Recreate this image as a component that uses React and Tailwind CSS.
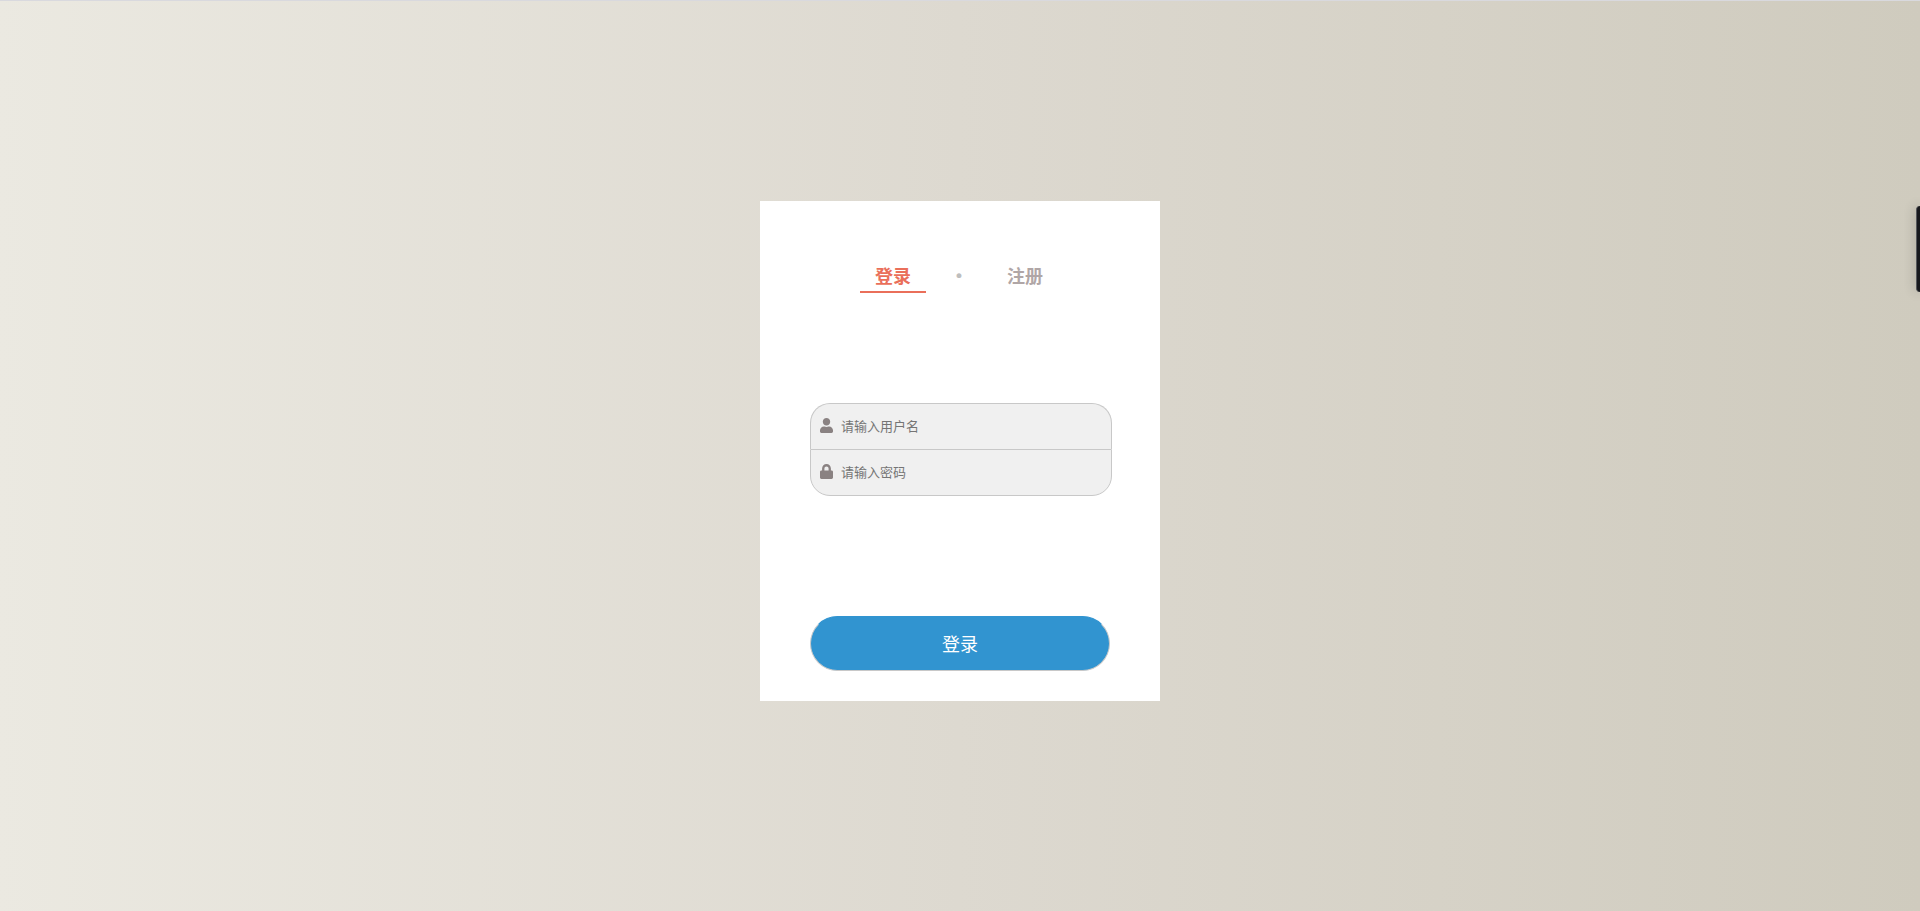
import { useState } from 'react'
import { FaUser, FaLock } from 'react-icons/fa'

const tabs = [
  { id: 'login', label: '登录' },
  { id: 'register', label: '注册' },
]

function Tab({ tab, active, onSelect }) {
  return (
    <a
      href={`#${tab.id}`}
      onClick={() => onSelect(tab.id)}
      className={`border-b-2 px-[15px] leading-[30px] ${active ? 'border-[#ea6f5a] text-[#ea6f5a]' : 'border-transparent text-[#b0a6a6]'}`}
    >
      {tab.label}
    </a>
  )
}

function Field({ id, type, icon: Icon, placeholder, className }) {
  return (
    <div className={`flex items-center border border-[#c8c8c8] bg-[#f0f0f0] pl-[9px] ${className}`}>
      <label htmlFor={id} aria-label={placeholder} className="pb-0.5 text-[#8a8282]">
        <Icon className="h-[15px] w-[13px]" aria-hidden="true" />
      </label>
      <input
        id={id}
        type={type}
        placeholder={placeholder}
        className="h-[45px] min-w-0 flex-1 bg-transparent pb-0.5 pl-2 text-[13px] outline-none placeholder:text-[#757575]"
      />
    </div>
  )
}

export default function App() {
  const [active, setActive] = useState('login')
  const current = tabs.find((tab) => tab.id === active)

  return (
    <div className="relative min-h-screen overflow-hidden border-t border-[#d9d9de] bg-linear-to-r from-[#ebe9e1] via-[#ddd9d0] to-[#cfcbbe] font-['Noto_Sans','Noto_Sans_CJK_SC',sans-serif]">
      <main className="mx-auto mt-[200px] flex h-[500px] w-full max-w-[400px] flex-col bg-white px-[50px]">
        <nav className="mt-[60px] mr-0.5 flex items-center justify-center text-lg font-bold">
          <Tab tab={tabs[0]} active={active === 'login'} onSelect={setActive} />
          <b className="w-[66px] pb-1 text-center text-2xl leading-7 text-[#bebebe]">·</b>
          <Tab tab={tabs[1]} active={active === 'register'} onSelect={setActive} />
        </nav>

        <form className="mt-[110px]" onSubmit={(e) => e.preventDefault()}>
          <div className="-mr-0.5">
            <Field id="username" type="text" icon={FaUser} placeholder="请输入用户名" className="rounded-t-[20px] border-b-0" />
            <Field id="password" type="password" icon={FaLock} placeholder="请输入密码" className="rounded-b-[20px]" />
          </div>
          <button
            type="submit"
            className="mt-[120px] h-[55px] w-full cursor-pointer rounded-full border border-[#c8c8c8] border-t-[#3194d0] bg-[#3194d0] text-lg text-white"
          >
            {current.label}
          </button>
        </form>
      </main>

      <div className="absolute top-[205px] right-0 h-[86px] w-1 rounded-l-md border-l border-[#55575b] bg-[#17181d] shadow-[0_0_12px_rgba(0,0,0,0.3)]" />
    </div>
  )
}
